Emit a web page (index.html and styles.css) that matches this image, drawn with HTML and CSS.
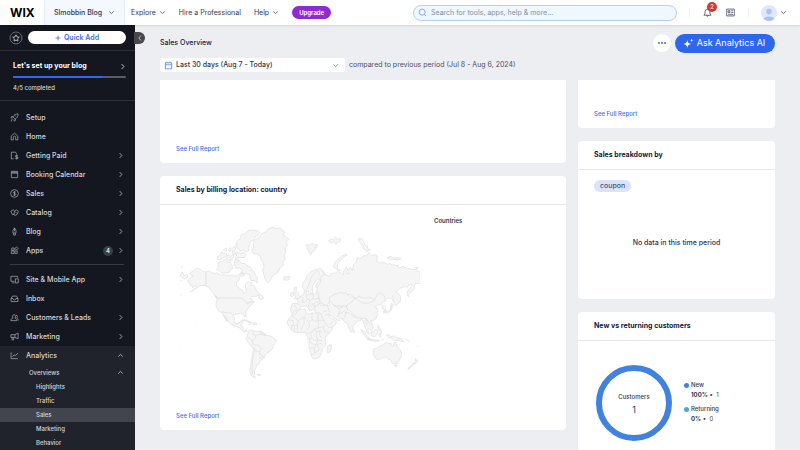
FILE: index.html
```html
<!DOCTYPE html>
<html lang="en">

<head>
    <meta charset="utf-8">
    <title>Sales Overview</title>
    <link rel="stylesheet" href="styles.css">
</head>

<body>
    <!-- shared shapes -->
    <svg class="defs" aria-hidden="true">
        <symbol id="right" viewBox="0 0 8 8"><path d="M3 1.2 5.6 4 3 6.8" /></symbol>
        <symbol id="down" viewBox="0 0 8 8"><path d="M1.4 2.8 4 5.3 6.6 2.8" /></symbol>
        <symbol id="up" viewBox="0 0 8 8"><path d="M1.4 5.2 4 2.7 6.6 5.2" /></symbol>
    </svg>

    <header class="topbar">
        <a class="logo" href="#">WIX</a>
        <button class="site">Slmobbin Blog <svg class="chev"><use href="#down" /></svg></button>
        <nav class="topnav">
            <button>Explore <svg class="chev"><use href="#down" /></svg></button>
            <a href="#">Hire a Professional</a>
            <button>Help <svg class="chev"><use href="#down" /></svg></button>
            <button class="upgrade">Upgrade</button>
        </nav>
        <label class="search">
            <svg class="icon" viewBox="0 0 10 10"><circle cx="4.6" cy="4.6" r="3.4" /><path d="M7.1 7.1 9 9" /></svg>
            <input type="search" aria-label="Search" placeholder="Search for tools, apps, help &amp; more...">
        </label>
        <div class="tools">
            <button class="bell" aria-label="Notifications">
                <svg class="icon" viewBox="0 0 10 10"><path d="M1 8h8L7.8 6.5V4.3a2.8 2.8 0 0 0-5.6 0v2.2zM4 8.2a1 1 0 0 0 2 0M5 .6v.9" /></svg>
                <span class="count">2</span>
            </button>
            <button aria-label="News">
                <svg class="icon" viewBox="0 0 10 10"><path d="M.8 1.2h8.4v7.6H.8zM2.4 3h2v2h-2zM5.8 3h2M5.8 5h2M2.4 7h5.4" /></svg>
            </button>
        </div>
        <button class="account" aria-label="Account">
            <svg class="avatar" viewBox="0 0 16 16"><circle cx="8" cy="8" r="8" fill="#dfe8fc" /><circle cx="8" cy="6.6" r="2.8" fill="#a9c3f8" /><path d="M2.5 13.8a6 4 0 0 1 11 0A8 8 0 0 1 2.5 13.8z" fill="#a9c3f8" /></svg>
            <svg class="chev"><use href="#down" /></svg>
        </button>
    </header>

    <div class="page">
        <aside class="sidebar">
            <div class="quick">
                <button class="star" aria-label="Favorites">
                    <svg viewBox="0 0 14 14"><circle cx="7" cy="7" r="6" stroke="#80838b" /><path d="m7 3.8 1 2.1 2.3.3-1.7 1.6.4 2.3-2-1.1-2 1.1.4-2.3-1.7-1.6L6 5.9z" /></svg>
                </button>
                <button class="add"><svg viewBox="0 0 6 6"><path d="M3 .5v5M.5 3h5" /></svg>Quick Add</button>
            </div>
            <div class="progress">
                <a href="#">Let's set up your blog <svg class="chev"><use href="#right" /></svg></a>
                <div class="track"><div class="bar" style="width: 80%"></div></div>
                <p>4/5 completed</p>
            </div>
            <nav class="menu">
                <a href="#"><svg class="icon" viewBox="0 0 10 10"><path d="M9 1C6.5 1 4.600 2 3.300 4.200L5.800 6.700C8 5.400 9 3.500 9 1zM3.500 4H1.700L1 5.300l2 .3M6 6.500v1.800L4.700 9l-.3-2M2.600 6.800 1 9l1-.2M6 3.300l.8.700" /></svg>Setup</a>
                <a href="#"><svg class="icon" viewBox="0 0 10 10"><path d="M1.300 4.600 5 1.300l3.700 3.300V8.700H6.300V6a1.300 1.300 0 0 0-2.600 0v2.700H1.300z" /></svg>Home</a>
                <a href="#"><svg class="icon" viewBox="0 0 10 10"><path d="M4 8.700H1.500V1.300H6l1.300 1.400V4M9 5.200H6.200v1.600h2.500v1.700H5.800M7.500 4.400v5" /></svg>Getting Paid<svg class="chev"><use href="#right" /></svg></a>
                <a href="#"><svg class="icon" viewBox="0 0 10 10"><path d="M1.500 1.500h7v7h-7zM1.500 3.500h7M1.500 2.500h7" /></svg>Booking Calendar<svg class="chev"><use href="#right" /></svg></a>
                <a href="#"><svg class="icon" viewBox="0 0 10 10"><circle cx="5" cy="5" r="4.300" /><path d="M6.400 3.600C6 3 3.700 2.800 3.700 4S6.400 4.800 6.400 6 4 7 3.600 6.300M5 2.200v5.600" /></svg>Sales<svg class="chev"><use href="#right" /></svg></a>
                <a href="#"><svg class="icon" viewBox="0 0 10 10"><path d="M1 3.500 3.500 2l1.600 1.500L4.500 7 2.800 7.500zM5 3.500 7 2l2.300 1.800L8 7 5.500 8.300 4 7M6 4.500l1.400 1" /></svg>Catalog<svg class="chev"><use href="#right" /></svg></a>
                <a href="#"><svg class="icon" viewBox="0 0 10 10"><path d="M5 1 3.300 4v2.700h3.400V4zM5 1v3.700M4 6.800V9h2V6.800" /></svg>Blog<svg class="chev"><use href="#right" /></svg></a>
                <a href="#"><svg class="icon" viewBox="0 0 10 10"><path d="M1.500 5.400h3v3h-3zM5.500 5.400h2.600v2.800H5.500zM2 2.200h2.700v2.500H2zM7.300 1 9 2.700 7.300 4.500 5.500 2.700z" /></svg>Apps<span class="pill">4</span><svg class="chev"><use href="#right" /></svg></a>
                <hr>
                <a href="#"><svg class="icon" viewBox="0 0 10 10"><path d="M5 7H1V1.500h7.500V3M2.500 8.700H5M6 4.200h3.200v4.600H6z" /></svg>Site &amp; Mobile App<svg class="chev"><use href="#right" /></svg></a>
                <a href="#"><svg class="icon" viewBox="0 0 10 10"><path d="M1.200 5 2.800 2.300h4.400L8.800 5v3.400H1.200zM1.200 5h2.200c0 2 3.200 2 3.200 0h2.200" /></svg>Inbox</a>
                <a href="#"><svg class="icon" viewBox="0 0 10 10"><path d="M1 8.500c0-2 1-2.400 2.300-2.800C1.500 1 6.500.5 6 4.500c0 .8-.5 1.200-.5 1.200C7 6 7.500 7 7.500 8.500zM6.500 2.200C9 2.500 8 5 7.600 5.600 9 6.200 9 7 9 8.500" /></svg>Customers &amp; Leads<svg class="chev"><use href="#right" /></svg></a>
                <a href="#"><svg class="icon" viewBox="0 0 10 10"><path d="M9 1.200v6.300L5.500 6H1V3h4.500zM5.500 3v3M2.300 6v2.800h1.800V6" /></svg>Marketing<svg class="chev"><use href="#right" /></svg></a>
                <div class="open">
                    <a href="#"><svg class="icon" viewBox="0 0 10 10"><path d="M1.200 1.500v7h7.500M2.800 6.300l1.700-2 1.500 1 2.800-3" /></svg>Analytics<svg class="chev"><use href="#up" /></svg></a>
                    <a class="sub" href="#">Overviews<svg class="chev"><use href="#up" /></svg></a>
                    <a class="leaf" href="#">Highlights</a>
                    <a class="leaf" href="#">Traffic</a>
                    <a class="leaf active" href="#">Sales</a>
                    <a class="leaf" href="#">Marketing</a>
                    <a class="leaf" href="#">Behavior</a>
                </div>
            </nav>
            <button class="collapse" aria-label="Collapse"><svg viewBox="0 0 8 8"><path d="M5 1.500 2.800 4 5 6.500" /></svg></button>
        </aside>

        <main class="content">
            <div class="title">
                <h1>Sales Overview</h1>
                <button class="more" aria-label="More actions"><i></i><i></i><i></i></button>
                <button class="ask"><svg viewBox="0 0 12 12"><path d="M4.700 2.300C5.200 5.300 6 6.100 9 6.600 6 7.100 5.200 8 4.700 11 4.200 8 3.400 7.100.4 6.600 3.400 6.100 4.200 5.300 4.700 2.300zM9.500.5C9.700 2 10 2.300 11.500 2.500 10 2.700 9.700 3 9.500 4.500 9.300 3 9 2.700 7.500 2.500 9 2.300 9.300 2 9.500.5z" /></svg>Ask Analytics AI</button>
            </div>
            <div class="filter">
                <button class="period">
                    <svg class="icon" viewBox="0 0 10 10"><path d="M1.500 2h7v6.800h-7zM1.500 4.200h7M3.200.8V2M6.800.8V2" /></svg>
                    Last 30 days (Aug 7 - Today)
                    <svg class="chev"><use href="#down" /></svg>
                </button>
                <span>compared to previous period (Jul 8 - Aug 6, 2024)</span>
            </div>

            <div class="cards">
                <div class="column wide">
                    <section class="card cut tall"><a class="report" href="#">See Full Report</a></section>
                    <section class="card">
                        <h2>Sales by billing location: country</h2>
                        <div class="location">
                            <svg class="map" viewBox="18 0 732 510" role="img" aria-label="World map">
                                <!-- greenland, iceland -->
                                <path d="M250 85l7-12 10-5 8-12 14-6 4-8 14-5 10 3 14-1 8 8 6 4-7 9 13 7 6 7-9 6 4 10-7 9 3 12-6 10 4 12-8 8 2 10-10 8-6 13-9 6-8 5-3 8-7 10-4 2-7-8-4-15-4-12 4-12-2-12-6-9-3-12-10-6-12-3-5-9 7-8zM340 188l5-4 5 2 8-2 3 5-7 6-7 1-7-3 3-2z" />
                                <!-- canadian islands -->
                                <path d="M198 88l5-12 7-4 3-12 13-5 8-8 14-2 14 2 7 5-4 9-9 4-4 10-10 4-3 10-4 9 1 10-9 1-7-4-8 3-6-8-7-3z" />
                                <path d="M193 140l9 3 6-6 6 8 13 1 6 8 9 2 3 10 8 4 2 9 7 8-1 17-8-8-8 1-6-9 2-8-12-4-8 2-8-5 5-7-9-8-11 2-5-10zM145 142l13-3 8-6 6 8 9 0 5 11 3 8-9 5-4 9-12-1-6 2-12-9-7-2 6-10zM143 126l8-8 4-8 8 6 6-1 1 8-12 6-8 6-8-2zM168 128l8-9 7 6 5-7 4 7-9 6 1 6-11-2zM187 101l7-8 3 10-4 4 5 9-8 4-3-9zM199 112l12 4 12-3 6 8-7 7-17-1-7-7zM176 105l4-8 4 8-4 6zM197 127l7 2 1 8-8-1zM207 180l9-8 9 6-7 7zM160 104l8-5 3 7-7 3z" />
                                <!-- alaska, canada -->
                                <path d="M108 171l-13-4-7-6-9-1-9 8-8 4 0 8 9 3-8 5-8 7-1 7 7 3-2 5 10 3-2 5 11-7 2 7-15 10 14-7 8-8 9-2 12 1z" />
                                <path d="M108 171l9-3 13 7 11-1 10 6 12-1 11 4 12-3 8 3 10-1 8-8 3 6-7 9-1 7-7 5-1 10 10 9 9 6 3 10 6-5 2-10-3-5 1-10 8-6 8 4 2 8 7-1 4 8 5 9 5 5 2 6-9 5-11 1-9 6 7 1 1 7-12 3-11 6-2-6-10-4-7-5-10-2H143l-8-7-5-10-9-10-4-8-9-2zM268 239l8 2 5 9-8 4-7-4zM136 241l7 8-3 2z" />
                                <!-- usa, mexico, central america -->
                                <path d="M143 249h67l9 3 7 6 5 9 9-4 12-5-3 8-8 4-4 8-6 8-5 7 3 12-5 1-4-9-9-2-9 2-11 2-5 8-9-8-8-5-10-1-12-3-5-8-4-9 1-12z" />
                                <path d="M157 290l12 3h10l9 6 6 9-1 11 5 8 9-2 5-8 8 1-3 7-5 7 7 4-1 7 6 5 7-2-6 5-9-4-6-8-9-4-9-3-11-5-6-7-4-8-6-6-3-6 7 9 4 9-2 1-6-8-6-11zM217 315l9-1 10 5 11 4-8 1-9-6zM248 326l5-3 10 3-3 3-11 0zM236 327l5 1M267 328h5" />
                                <!-- south america -->
                                <path d="M232 351l8-6 7-1 6 5 12 0 8-1 9 7 3 6 12 1 8 3 8 6 6 4-1 7-8 9-2 10-8 9-9 3-6 9-4 7-4 5-7 3-3 10-7 3-2 9-5 8 1 8-3 8 6 4-8 0-6-7-4-12 3-13 2-17 4-21 2-18-10-9-7-10-5-9 4-9 3-9z" />
                                <path class="borders" d="M250 346l-2 12 9 4 0 8-11 8 3 6-8 8M232 367l10 4 4 8M257 362l16-5-4-9M273 357l12-1M273 357l11 5 6-6M249 385l5 5 10 0 10 12-4 8-12-2-6-10-5 2M270 410l-2 8 9 2 6 10M254 406l-4 15-3 20-1 20 2 16M277 424l-10 6" />
                                <path d="M32 155l6 3M30 180l7-8 6 10 8-4 2 9-8 5-9-5zM30 195l5 3M32 240l5-1M58 232l7-4M79 320l2 2M31 391l2 1M261 480l9-3 2 4z" />
                                <g transform="translate(360)">
                                    <!-- british isles, arctic islands -->
                                    <path d="M14 216l7 2-2 8 6 7 2 8 4 4-7 6-12 1 5-8-3-6 2-6-5-4zM4 233l6-2 2 8-6 7-5-3zM47 91l8-4 4 4 7-6 8 4 8 0-1 8-8 0 4 7-9 5-5 9-5-2-2-10-6-7 5-4zM115 78l8-6 6 2 8-8 5 7 10-2 0 8-9 3-5 6-5-7-9 3zM204 76l5-7 8 4 4 8 5 10 8 3-2 6 9 5-7 4-9-4-8-8 5-3-10-8zM130 155l5-13 9-9 10-9 15-7 2 3-14 9-8 9-7 12 1 11 8 6-11-3zM291 129l10-5 9 5 14-1 9 3-10 4-13-2-9 2zM318 152l8-1-3 5zM376 158l8 0-3 4z" />
                                    <!-- scandinavia, europe -->
                                    <path d="M38 216l0-11 8-10 6-13 10-11 12-7 8 0 8-5 7 6 6 9 7 10-8 9-5 11 4 9-9 5-11 1-4-5 5-10 7-10-7-3-6 10-9 11 1 10 0 9-7 9-5-5-2-8-8 3zM50 222l8-15 5-19 11-14 9-8M85 165l3 13 5 4M102 180l-6-12" />
                                    <path d="M8 265l14 1 2-7-5-7 8-2 6-8 8-4 2-9 5-3 3 6-5 4 8 3 12-2 9 0 6-6-1-8 9 0 9-4 7 6 3 10 10 8-2 8 8 5-9 4-9 2-5 7-8-5-9 4-5 7-3 8-7 2-5-9-9-6 1 5 10 11-6 2-8-13-10-3-10 4-5 9-5 9-12 2-6-5-3-8z" />
                                    <path class="borders" d="M22 266l9 4M33 243l6 9-3 10 9 0 7-9-4-13M52 252l10 3 5-4 8 2 9-4 5 8 10 1M62 255l-6 7 6 5 10 0 0 8M72 267l6-6 9-1 4 9M67 233l4 10-4 8M80 235l7 7-3 8M88 230l12 5 8 14M22 282l-10-12M72 275l7 1" />
                                    <!-- russia -->
                                    <path d="M100 180l9 0 11 4 3-8 16-3 5-4 12 7 5 4-1-9 8-13 6 4-6 11 9 4-1-15 7-4 3 10 3-10 2-10 8-7 2-12 10 1 10-7 9-1 7-9 9 9 11-3 5 4-2 15 9 6 13-1 12 5 5-3 9 5 12 1 8 8 9-5 15 6 12 3 13 1 11 7 10 2 12 7 7 9-7 5-6-4-10 2 3 9-9 5-12-1-3 9-3 11-10 9-5 11-4-10 4-11 8-8 4-7-10 0-5 8-9-2-13 5-11 11 8 6 5 8-1 13-8 10-7 4-2-9-10-13-13-1-7 9-16-1-15 2-14-5-17 6-16-9-11-2-13-10-20-2-16 7-13 6-5 10-4 5-9-1-6 8-11-5-8-10-4-11 1-11-7-8 4-14 8-12-1-11z" />
                                    <!-- central asia, mongolia, china, korea -->
                                    <path d="M118 248l13-9 17-6 19 2 14 10 12 3-2 9-13 10-9 7-13-2-12 6-11-9-8 4-7-10z" />
                                    <path d="M194 250l15-5 15 5 17-2 12 5-2 8-15 8-17 1-15-9zM206 246l0-5" />
                                    <path d="M193 250l-8 12-11 5-5 10 5 9 10 4 5 10 15 9 12 2 5 8 9-4 10 5 9-3 8-6 6-9-2-9 3-9-8-9 9-6 7 2 6-7 8-8-3-14-11-7-8 0-6 12-4 9-17 9-18-1z" />
                                    <path d="M279 270l-4 8 7 5 0 9 5-5-1-9 5-7M280 292l4-5 10 2 7-6 2-11 4 2-3 12-8 6-13 2zM302 272l1-7 8 3-4 5zM310 263l-2-23M257 311l2-5" />
                                    <!-- middle east, india, indochina -->
                                    <path d="M75 275l10-6 13 3 14 0 8-2-4-8 5-4 6 7 5 8 14-1 10 4 13-3 4 13-8 8 4 9 8 5-1 6-13-1-12-3-4 8-10-6-9-5-4-6-8-1 7 10 8 4 9 5-3 10-12 8-12 6-6-12-9-14-3-12-6-12-14-1z" />
                                    <path class="borders" d="M112 272l5 12 1 12M100 290l12-3M133 272l12 6 3 12-5 16M104 300l15-2M118 328l10-7M146 296l10-2 9-9M145 281l14-6" />
                                    <path d="M157 313l7-5 4-16 12 2 8 9 15 6 11-1-3 10-6-1-9 8-7 8 0 12-5 7-6-9-6-17-7-4zM190 345l4 3-2 5-3-3zM213 312l7 8 3 12 5 12 3 9 7 5-5-13 3-5 8 7 6-9-2-10-7-9 3-5M216 311l10-2 6 8-5 7 6 5M228 309l8 13 8 8" />
                                    <!-- africa, madagascar -->
                                    <path d="M-8 325l2-12 8-7 6-13 9-7 14-2 14-2 3 11 10 4 8-4 17 4 10-1 4 11 6 12 8 12 5 7 13-1-6 12-11 11-7 10 2 13-1 10-9 9-2 11-6 12-8 5-11 2-5-8-6-18-3-14 4-11-4-12-6-8-2-9-11 0-13 1-12-2-8-8-7-9zM112 395l11-7 2 7-5 16-7 2-2-8z" />
                                    <path class="borders" d="M23 286l-5 10-12 7M6 303l19 14 17-10 7-10M66 296l0 18 12 5M66 314l-10 6-14-13M84 298l0 18h21M78 319l6-3 2 22-14 4-6 11M56 320l3 16-10 8M25 317l-2 13-17 2M42 307l1 17-5 8-6 15M-5 315l15 2 0 12M86 338l12-2 8-7M99 336l5 15 14 1M72 342l8 8 9-2 8 5M49 354l13 0 5-9M62 354l4 16-15 3M80 350l-2 15 7 10 13 3M66 370l7 6 10-1-2 10-5 4-8-2-5-5-12-2M58 400l14-1 8-10 14-4M72 399l2 15-10 8M80 389l7 10-3 10-10 5M89 348l0 14 9 8M23 330l-2 19M13 332l0 17M4 330l2 13" />
                                    <!-- islands, australia, new zealand -->
                                    <path d="M213 344l7 4 10 12 9 11-4 2-10-9-8-11zM242 352l10-3 6-7 6 5-3 10-6 8-10-2zM232 371l12 2 11 2 12 1-1 3-20-2-14-3zM267 356l7-4 2 3-6 3 5 6-3 4-5-6zM262 333l3-3 3 8 5 4 1 8-5-2-4-8zM289 360l9 0 4 5 10-2 10 5 12 3 8 9-11-2-8-3-9 3-7-8-12-4zM344 372l8 3 5 6M358 401l2 2M383 393l4 2M272 375l10-1" />
                                    <path d="M249 403l10-3 8-6 9-3 6-5 8-4 4 3 9-1 0 6 6 4 4-13 4 2 2 8 6 8 7 8 3 9-2 12-6 8-4 9-10 2-8-4-3-9-7-2-7-6-11 2-9 5-10 0-4-9-5-8 1-7zM313 450l8 0-3 7zM377 431l3 5 4 1-7 8-6 3 4-8zM370 444l3 3-9 9-9 7-1-4 9-7z" />
                                </g>
                            </svg>
                            <h3>Countries</h3>
                        </div>
                        <a class="report" href="#">See Full Report</a>
                    </section>
                </div>
                <div class="column">
                    <section class="card cut"><a class="report" href="#">See Full Report</a></section>
                    <section class="card breakdown">
                        <h2>Sales breakdown by</h2>
                        <button class="tag">coupon</button>
                        <p class="empty">No data in this time period</p>
                    </section>
                    <section class="card">
                        <h2>New vs returning customers</h2>
                        <div class="customers">
                            <div class="donut"><span>Customers</span><b>1</b></div>
                            <dl>
                                <dt>New</dt>
                                <dd><b>100%</b> • &nbsp;1</dd>
                                <dt class="light">Returning</dt>
                                <dd><b>0%</b> • &nbsp;0</dd>
                            </dl>
                        </div>
                    </section>
                </div>
            </div>
        </main>
    </div>
</body>

</html>
```
FILE: styles.css
```css
* {
    box-sizing: border-box;
}

body {
    margin: 0;
    height: 100vh;
    overflow: hidden;
    display: flex;
    flex-direction: column;
    font: 7px/10px Inter, "Open Sans", sans-serif;
    color: #32364d;
    background-color: #eceef2;
}

a {
    color: inherit;
    text-decoration: none;
}

button,
input {
    font: inherit;
    color: inherit;
    border: 0;
    padding: 0;
    background: none;
}

button {
    display: flex;
    align-items: center;
    justify-content: center;
    cursor: pointer;
}

h1,
h2,
h3,
p,
dl,
dd {
    margin: 0;
}

svg {
    fill: none;
    stroke: currentColor;
    stroke-width: 0.8;
    flex: none;
}

.defs {
    position: absolute;
    width: 0;
    height: 0;
}

.chev {
    width: 7px;
    height: 7px;
}

.icon {
    width: 9px;
    height: 9px;
}

/* top bar */

.topbar {
    display: flex;
    align-items: center;
    flex: none;
    height: 25px;
    background-color: #fff;
    box-shadow: 0 0 3px rgba(0, 0, 0, 0.2);
    z-index: 1;
}

.logo {
    width: 44px;
    padding-left: 10px;
    font-size: 12px;
    font-weight: 700;
    color: #000;
}

.site {
    height: 25px;
    width: 81px;
    gap: 6px;
    font-weight: 500;
    background-color: #f4f9ff;
    border-left: 1px solid #e3ecf8;
    border-right: 1px solid #e3ecf8;
}

.topnav {
    display: flex;
    align-items: center;
    gap: 13px;
    padding-left: 6px;
}

.topnav button {
    gap: 3px;
}

.topnav .upgrade {
    height: 13px;
    padding: 0 7px;
    font-size: 6px;
    font-weight: 600;
    border-radius: 7px;
    color: #fff;
    background-color: #8f2cd0;
}

.search {
    display: flex;
    align-items: center;
    gap: 4px;
    width: 264px;
    height: 16px;
    margin-left: auto;
    padding: 0 4px;
    border: 1px solid #b5d0f7;
    border-radius: 8px;
    background-color: #eff7ff;
    color: #5d8df0;
}

.search input {
    flex: 1;
    outline: 0;
}

.search input::placeholder {
    color: #8290a5;
}

.tools {
    display: flex;
    gap: 14px;
    margin: 0 12px 0 12px;
    padding: 0 13px 0 13px;
    border-left: 1px solid #eef0f3;
    border-right: 1px solid #eef0f3;
}

.bell {
    position: relative;
}

.count {
    position: absolute;
    left: 4px;
    top: -6px;
    width: 10px;
    height: 10px;
    border-radius: 5px;
    font-size: 6px;
    color: #fff;
    background-color: #d3382c;
}

.account {
    gap: 3px;
    margin-right: 13px;
}

.avatar {
    width: 16px;
    height: 16px;
    stroke: none;
}

/* sidebar */

.page {
    display: flex;
    flex: 1;
    min-height: 0;
}

.sidebar {
    position: relative;
    display: flex;
    flex-direction: column;
    flex: none;
    width: 135px;
    font-weight: 500;
    color: #d5d7db;
    background-color: #14171f;
}

.quick {
    display: flex;
    align-items: center;
    flex: none;
    gap: 5px;
    height: 26px;
    padding: 0 9px;
    border-bottom: 1px solid #2d3039;
}

.star svg {
    width: 14px;
    height: 14px;
}

.add {
    flex: 1;
    gap: 3px;
    height: 13px;
    border-radius: 7px;
    font-weight: 600;
    color: #3a6ee8;
    background-color: #fff;
}

.add svg {
    width: 6px;
    height: 6px;
}

.progress {
    flex: none;
    height: 50px;
    padding: 10px 9px 0 13px;
    border-bottom: 1px solid #2d3039;
    font-size: 6px;
}

.progress a {
    display: flex;
    align-items: center;
    justify-content: space-between;
    font-size: 7px;
    font-weight: 700;
    color: #fff;
}

.track {
    height: 2px;
    margin: 5px 0;
    border-radius: 1px;
    background-color: #5a5d66;
}

.bar {
    height: 2px;
    border-radius: 1px;
    background-color: #3467e8;
}

.menu {
    display: flex;
    flex-direction: column;
    flex: 1;
    min-height: 0;
    padding-top: 7px;
    overflow: hidden;
}

.menu a {
    display: flex;
    align-items: center;
    flex: none;
    height: 19px;
    padding: 0 11px 0 10px;
}

.menu .icon {
    margin-right: 7px;
    color: #a9acb3;
}

.menu .chev {
    margin-left: auto;
}

.menu hr {
    flex: none;
    height: 1px;
    margin: 4px 11px 5px 10px;
    border: 0;
    background-color: #383b44;
}

.menu .pill {
    width: 10px;
    height: 10px;
    margin: 0 4px 0 auto;
    border-radius: 5px;
    text-align: center;
    font-size: 6px;
    color: #fff;
    background-color: #3a3e4b;
}

.menu .pill + .chev {
    margin-left: 0;
}

.open {
    flex: 1;
    background-color: #20232b;
}

.menu .sub,
.menu .leaf {
    height: 14px;
    padding-left: 29px;
    font-size: 6px;
}

.menu .sub {
    height: 15px;
}

.menu .leaf {
    padding-left: 36px;
}

.menu .active {
    background-color: #42454d;
}

.collapse {
    position: absolute;
    left: 134px;
    top: 7px;
    width: 11px;
    height: 12px;
    border-radius: 0 6px 6px 0;
    background-color: #46484e;
}

.collapse svg {
    width: 8px;
    height: 8px;
}

/* content */

.content {
    flex: 1;
    min-width: 0;
    padding: 8px 25px 0;
    overflow: hidden;
}

.title {
    display: flex;
    align-items: center;
    height: 20px;
}

.title h1 {
    margin-right: auto;
    font-size: 7px;
    font-weight: 500;
    color: #15193a;
}

.more {
    gap: 1px;
    width: 18px;
    height: 18px;
    margin-right: 4px;
    border-radius: 9px;
    background-color: #fff;
}

.more i {
    width: 2px;
    height: 2px;
    border-radius: 1px;
    background-color: #3f70e8;
}

.ask {
    gap: 3px;
    width: 100px;
    height: 19px;
    padding-right: 2px;
    border-radius: 10px;
    font-size: 9px;
    color: #fff;
    background-color: #2f66f0;
}

.ask svg {
    width: 11px;
    height: 11px;
    fill: #fff;
    stroke: none;
}

.filter {
    display: flex;
    align-items: center;
    gap: 4px;
    height: 14px;
    margin: 5px 0 8px;
    color: #4c5064;
}

.period {
    width: 185px;
    height: 14px;
    padding: 0 6px 0 4px;
    gap: 3px;
    border-radius: 2px;
    font-weight: 500;
    color: #30344a;
    background-color: #fff;
}

.period svg {
    color: #3f78e8;
}

.period .chev {
    margin-left: auto;
}

.cards {
    display: grid;
    grid-template-columns: repeat(3, 1fr);
    gap: 12px;
    align-items: start;
}

.column {
    display: flex;
    flex-direction: column;
    gap: 13px;
}

.wide {
    grid-column: span 2;
}

.card {
    padding: 0 16px 9px;
    border-radius: 4px;
    background-color: #fff;
}

.card h2 {
    margin: 0 -16px;
    padding: 9px 16px;
    border-bottom: 1px solid #e6e8ec;
    font-size: 7px;
    font-weight: 700;
    color: #15193a;
}

.card h3 {
    margin: 11px 0 0;
    font-size: 6px;
    font-weight: 600;
}

/* cards scrolled partly under the filter row */
.cut {
    padding-top: 29px;
    border-radius: 0 0 4px 4px;
}

.tall {
    padding-top: 64px;
}

.report {
    display: block;
    width: fit-content;
    font-size: 6px;
    font-weight: 500;
    color: #3a70ea;
}

.location {
    display: grid;
    grid-template-columns: 244px 1fr;
    gap: 14px;
    align-items: start;
    height: 206px;
}

.map {
    width: 100%;
    margin-top: 10px;
    fill: #f5f5f5;
    stroke: #dedede;
    stroke-width: 2;
}

.borders {
    fill: none;
}

.breakdown {
    height: 158px;
}

.tag {
    height: 12px;
    margin: 10px 0 46px;
    padding: 0 6px;
    border-radius: 6px;
    font-weight: 500;
    color: #4a5274;
    background-color: #d9e4f9;
}

.empty {
    text-align: center;
    font-weight: 500;
    color: #30344a;
}

.customers {
    display: flex;
    gap: 12px;
    padding: 24px 2px;
}

.donut {
    display: flex;
    flex-direction: column;
    align-items: center;
    justify-content: center;
    gap: 3px;
    width: 76px;
    height: 76px;
    border: 6px solid #4083df;
    border-radius: 50%;
    font-size: 6px;
    font-weight: 500;
}

.donut b {
    font-size: 9px;
    font-weight: 400;
}

.customers dl {
    padding-top: 15px;
    font-size: 6px;
}

.customers dt {
    display: flex;
    align-items: center;
    gap: 2px;
    font-weight: 500;
}

.customers dt::before {
    content: "";
    width: 5px;
    height: 5px;
    border-radius: 50%;
    background-color: #4083df;
}

.customers .light::before {
    background-color: #52a3dc;
}

.customers dd {
    margin: 0 0 4px 7px;
}
```
